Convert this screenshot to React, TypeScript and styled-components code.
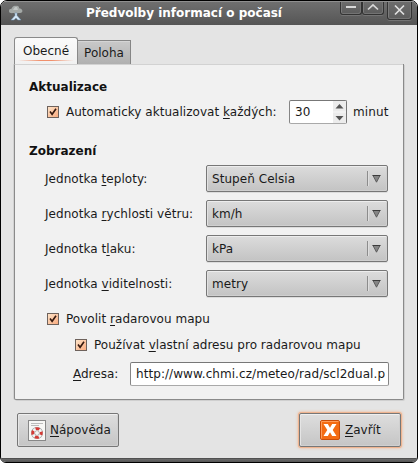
import React from "react";
import styled, { createGlobalStyle, css } from "styled-components";

const GlobalStyle = createGlobalStyle`
  html, body { margin: 0; padding: 0; background: #fff; }
  * { box-sizing: border-box; }
  body {
    font: 12px/20px "DejaVu Sans", sans-serif;
    color: #1a1a1a;
    overflow: hidden;
  }
`;

const Window = styled.div`
  width: 418px;
  height: 463px;
  display: flex;
  flex-direction: column;
  background: #e4e4e4;
  border: 1px solid #000;
  border-radius: 7px 7px 6px 6px;
  overflow: hidden;
`;

const TitleBar = styled.header`
  flex: 0 0 24px;
  display: grid;
  grid-template-columns: 40px 1fr 77px;
  background: linear-gradient(#6f6f6f, #555);
  border-top: 1px solid #8f8f8f;
`;

const AppIcon = styled.svg`
  width: 16px;
  height: 16px;
  margin: 3px 0 0 7px;
`;

const Title = styled.h1`
  margin: 0;
  padding-left: 45px;
  font-size: 12px;
  line-height: 23px;
  color: #fff;
  white-space: nowrap;
`;

const WindowButtons = styled.div`
  display: flex;
  align-items: flex-start;
`;

const WindowButton = styled.button<{ $close?: boolean }>`
  width: ${(p) => (p.$close ? 25 : 22)}px;
  height: ${(p) => (p.$close ? 18 : 13)}px;
  margin: 0 0 0 ${(p) => (p.$close ? 3 : 0)}px;
  padding: 0;
  border: 1px solid #333;
  border-top: 0;
  border-radius: 0 0 3px 3px;
  background: linear-gradient(#6c6c6c, #5c5c5c);
  box-shadow: inset 1px 0 #7b7b7b, inset -1px -1px #737373, 0 1px #747474;
  svg { display: block; width: 100%; height: 100%; }
`;

const Body = styled.main`
  flex: 1;
  padding: 12px 13px 0;
`;

const Tabs = styled.nav`
  display: flex;
  align-items: flex-end;
  height: 27px;
`;

const Tab = styled.div<{ $active?: boolean }>`
  display: flex;
  flex-direction: column;
  align-items: center;
  border: 1px solid #8a8a8a;
  border-bottom: 0;
  ${(p) =>
    p.$active
      ? css`
          width: 64px;
          height: 27px;
          padding-top: 3px;
          border-radius: 3px 3px 0 0;
          background: linear-gradient(#fafafa, #f1f1f1);
          z-index: 1;
          &::after {
            content: "";
            flex: none;
            width: 56px;
            height: 1px;
            margin-top: -1px;
            background: linear-gradient(90deg, transparent, #f0906c 40%, #f0906c 60%, transparent);
          }
        `
      : css`
          width: 54px;
          height: 24px;
          margin-left: -1px;
          padding-top: 2px;
          border-color: #858585;
          background: linear-gradient(#c9c9c9, #b0b0b0);
          box-shadow: inset 0 1px #d5d5d5;
        `}
`;

const PanelTopLine = styled.div`
  height: 1px;
  width: 326px;
  margin-left: 64px;
  background: #858585;
`;

const Panel = styled.section`
  display: flex;
  flex-direction: column;
  width: 390px;
  height: 336px;
  margin-top: -1px;
  padding: 12px 14px 0;
  border: 1px solid #8a8a8a;
  border-top-color: transparent;
  border-radius: 0 0 2px 2px;
  background: #f1f1f1;
  background-clip: padding-box;
  box-shadow: 1px 1px #cfcfcf, -1px 0 #d2d2d2;
`;

const PanelFrame = styled.div`
  display: flex;
  flex-direction: column;
  background: linear-gradient(#f1f1f1, #f1f1f1) 1px 0 / 63px 1px no-repeat;
`;

const Heading = styled.h2<{ $top?: number }>`
  margin: ${(p) => p.$top ?? 0}px 0 0;
  font-size: 12px;
  line-height: 20px;
  color: #111;
`;

const CheckRow = styled.label<{ $indent: number; $top: number; $height?: number }>`
  display: flex;
  align-items: center;
  height: ${(p) => p.$height ?? 20}px;
  margin: ${(p) => p.$top}px 0 0 ${(p) => p.$indent}px;
  white-space: nowrap;
`;

const CheckLabel = styled.span`
  letter-spacing: 0.03px;
`;

const CheckMark = styled.svg`
  width: 12px;
  height: 12px;
  margin: 0 7px 1px 0;
  flex: none;
`;

const Mnemonic = styled.span`
  text-decoration: underline;
  text-decoration-thickness: 1px;
  text-underline-offset: 2px;
  text-decoration-skip-ink: none;
`;

const Field = styled.div`
  display: flex;
  height: 24px;
  border: 1px solid #a9a9a9;
  border-top-color: #777;
  border-left-color: #858585;
  border-radius: 2px;
  background: #fff;
  overflow: hidden;
  white-space: nowrap;
  line-height: 23px;
`;

const Spinner = styled(Field)`
  width: 58px;
  margin: 0 6px 0 auto;
  padding-left: 5px;
  justify-content: space-between;
  border-right-color: #777;
`;

const SpinUnit = styled.span`
  width: 36px;
  letter-spacing: 0.15px;
`;

const SpinArrows = styled.svg`
  width: 13px;
  height: 22px;
  background: #ececec;
`;

const UnitGrid = styled.div`
  display: grid;
  grid-template-columns: 161px 182px;
  grid-auto-rows: 27px;
  row-gap: 8px;
  align-items: center;
  margin: 4px 0 0 16px;
  white-space: nowrap;
  letter-spacing: 0.05px;
`;

const Combo = styled.div`
  display: flex;
  justify-content: space-between;
  height: 27px;
  padding: 0 6px 0 5px;
  line-height: 26px;
  border: 1px solid #777;
  border-radius: 2px;
  background: linear-gradient(#dcdcdc, #c3c3c3);
  box-shadow: inset 0 1px #ededed, inset 1px 0 #e2e2e2, inset -1px -1px #cfcfcf, 0 1px #dcdcdc;
`;

const ComboArrow = styled.svg`
  width: 14px;
  height: 25px;
`;

const AddressRow = styled.div`
  display: flex;
  align-items: center;
  height: 24px;
  margin: 7px 0 0 44px;
`;

const AddressLabel = styled.span`
  width: 57px;
`;

const AddressField = styled(Field)`
  width: 259px;
  padding: 0 3px 0 5px;
  border-right-color: #858585;
`;

const AddressText = styled.span`
  overflow: hidden;
  letter-spacing: 0.065px;
`;

const Actions = styled.footer`
  display: flex;
  justify-content: space-between;
  padding: 13px 3px 0;
`;

const ActionButton = styled.button<{ $focused?: boolean }>`
  display: flex;
  align-items: center;
  width: 102px;
  height: 34px;
  padding: 0 0 1px ${(p) => (p.$focused ? 19 : 8)}px;
  gap: ${(p) => (p.$focused ? 4 : 2)}px;
  border: 1px solid #777;
  border-radius: 2px;
  background: linear-gradient(#dedede, #c5c5c5);
  color: inherit;
  font: inherit;
  box-shadow: inset 0 1px #efefef, inset 1px 0 #e5e5e5, inset -1px -1px #d0d0d0
    ${(p) => (p.$focused ? ", 0 0 0 1px #efb490, 0 0 3px 1px #f2b58e" : "")};
  svg { width: 22px; height: 22px; flex: none; }
`;

const BottomEdge = styled.div`
  flex: 0 0 4px;
  background: linear-gradient(#444, #686868 35%, #555);
`;

const Check = () => (
  <CheckMark viewBox="0 0 12 12">
    <defs>
      <linearGradient id="peach" x1="0" y1="0" x2="1" y2="1">
        <stop offset="0" stopColor="#fde6cc" />
        <stop offset="1" stopColor="#faa97c" />
      </linearGradient>
    </defs>
    <rect x=".5" y=".5" width="11" height="11" fill="url(#peach)" stroke="#6e625c" />
    <path d="M3 5.6L5.1 8.3L9 2.8" fill="none" stroke="#35190f" strokeWidth="1.6" />
  </CheckMark>
);

const Unit = ({ before, letter, after, value }: { before: string; letter: string; after: string; value: string }) => (
  <>
    <span>{before}<Mnemonic>{letter}</Mnemonic>{after}</span>
    <Combo>
      {value}
      <ComboArrow viewBox="0 0 14 25">
        <path d="M.5 5v15" stroke="#8c8c8c" />
        <path d="M1.5 5v15" stroke="#dedede" />
        <path d="M6 9.5h7L9.500 16.2z" fill="#858585" stroke="#555" strokeWidth=".9" />
        <path d="M5.500 9.5h8" stroke="#3c3c3c" />
      </ComboArrow>
    </Combo>
  </>
);

export default function App() {
  return (
    <>
      <GlobalStyle />
      <Window>
        <TitleBar>
          <AppIcon viewBox="0 0 16 16">
            <path d="M8 1c2-.8 3.400.8 3 2.200 2 0 3.600 1.400 3.400 3-.3 1.800-2.800 2-4.400 1.800-1.500.9-3.300.8-4.300 0C3.400 8.300 1.100 8.200 1 6.200 1 4.500 2 3.700 3.500 3.800 4 2 6 .2 8 1z" fill="#a4a9a7" />
            <path d="M7 2h2l1 3H5z" fill="#c2c6c5" />
            <path d="M7 8h2v2.500l4 4.500H9.800L8 13l-2 2H3l4-4.500z" fill="#d5e7f5" stroke="#6e92b4" strokeWidth=".5" />
          </AppIcon>
          <Title>Předvolby informací o počasí</Title>
          <WindowButtons>
            <WindowButton aria-label="Minimize">
              <svg viewBox="0 0 20 12"><path d="M5 5h10" stroke="#d8d8d8" strokeWidth="2" /></svg>
            </WindowButton>
            <WindowButton aria-label="Maximize">
              <svg viewBox="0 0 20 12"><path d="M5 7.500L10 2.800L15 7.500" fill="none" stroke="#d8d8d8" strokeWidth="1.700" /></svg>
            </WindowButton>
            <WindowButton $close aria-label="Close">
              <svg viewBox="0 0 23 17"><path d="M7 3.500L16 12.500M16 3.500L7 12.500" stroke="#e0e0e0" strokeWidth="1.700" /></svg>
            </WindowButton>
          </WindowButtons>
        </TitleBar>
        <Body>
          <Tabs>
            <Tab $active>Obecné</Tab>
            <Tab>Poloha</Tab>
          </Tabs>
          <PanelTopLine />
          <Panel>
            <PanelFrame>
              <Heading>Aktualizace</Heading>
              <CheckRow $indent={18} $top={3} $height={24}>
                <Check />
                <CheckLabel>Automaticky aktualizovat <Mnemonic>k</Mnemonic>aždých:</CheckLabel>
                <Spinner>
                  30
                  <SpinArrows viewBox="0 0 13 22">
                    <path d="M2.500 7.500L6.500 3L10.500 7.500zM2.500 15L6.500 19.500L10.500 15z" fill="#555" />
                    <path d="M0 11h13" stroke="#f8f8f8" />
                  </SpinArrows>
                </Spinner>
                <SpinUnit>minut</SpinUnit>
              </CheckRow>
              <Heading $top={17}>Zobrazení</Heading>
              <UnitGrid>
                <Unit before="Jednotka " letter="t" after="eploty:" value="Stupeň Celsia" />
                <Unit before="Jednotka " letter="r" after="ychlosti větru:" value="km/h" />
                <Unit before="Jednotka t" letter="l" after="aku:" value="kPa" />
                <Unit before="Jednotka " letter="v" after="iditelnosti:" value="metry" />
              </UnitGrid>
              <CheckRow $indent={18} $top={12}>
                <Check />
                <CheckLabel>Povolit <Mnemonic>r</Mnemonic>adarovou mapu</CheckLabel>
              </CheckRow>
              <CheckRow $indent={46} $top={6}>
                <Check />
                <CheckLabel>Používat <Mnemonic>v</Mnemonic>lastní adresu pro radarovou mapu</CheckLabel>
              </CheckRow>
              <AddressRow>
                <AddressLabel><Mnemonic>A</Mnemonic>dresa:</AddressLabel>
                <AddressField><AddressText>http://www.chmi.cz/meteo/rad/scl2dual.p</AddressText></AddressField>
              </AddressRow>
            </PanelFrame>
          </Panel>
          <Actions>
            <ActionButton>
              <svg viewBox="0 0 22 22">
                <rect x="2.500" y="1.500" width="17" height="20" fill="#f7f7f5" stroke="#888" />
                <path d="M5 4.500h12M5 6.500h8" stroke="#bbb" />
                <circle cx="11" cy="14" r="4" fill="none" stroke="#999" strokeWidth="4" />
                <circle cx="11" cy="14" r="4" fill="none" stroke="#f4f4f4" strokeWidth="2.800" />
                <circle cx="11" cy="14" r="4.300" fill="none" stroke="#d43b36" strokeWidth="2.800" strokeDasharray="4 2.754" strokeDashoffset="2" />
              </svg>
              <span><Mnemonic>N</Mnemonic>ápověda</span>
            </ActionButton>
            <ActionButton $focused>
              <svg viewBox="0 0 22 22">
                <rect x="1.500" y="1.500" width="19" height="19" rx="1.500" fill="#f46b12" stroke="#c94d08" />
                <path d="M2.500 19.500v-17h17" fill="none" stroke="#ff9c58" />
                <path d="M4.500 5h4.300L11 8.700L13.200 5h4.300L13.700 11L17.500 17h-4.300L11 13.300L8.800 17H4.500L8.300 11z" fill="#fff" />
              </svg>
              <span><Mnemonic>Z</Mnemonic>avřít</span>
            </ActionButton>
          </Actions>
        </Body>
        <BottomEdge />
      </Window>
    </>
  );
}
